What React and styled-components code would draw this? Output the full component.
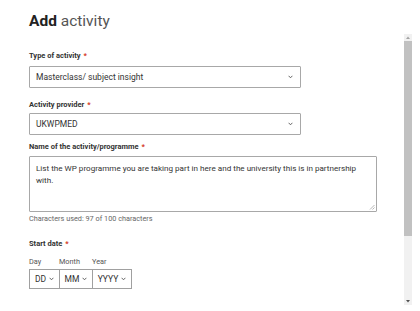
import React from 'react';
import styled, { createGlobalStyle } from 'styled-components';

const GlobalStyle = createGlobalStyle`
  html, body {
    margin: 0;
    padding: 0;
    background: #fff;
  }
  body {
    font-family: Roboto, "Liberation Sans", Arial, sans-serif;
    color: #333;
  }
`;

const Page = styled.div`
  width: 420px;
  height: 311px;
  box-sizing: border-box;
  padding: 11px 8px 6px 29px;
  display: flex;
  flex-direction: column;
  overflow: hidden;
`;

const Title = styled.h1`
  margin: 0;
  font-size: 15.5px;
  line-height: 20px;
  font-weight: 400;
  color: #555;
  b {
    font-weight: 700;
    color: #222;
  }
`;

const Body = styled.div`
  flex: 1;
  display: flex;
  margin-top: 3px;
`;

const Form = styled.form`
  flex: 1;
  padding-top: 17px;
`;

const Field = styled.div`
  margin-bottom: ${p => p.$gap || 0}px;
`;

const Label = styled.div`
  font-size: 7.5px;
  line-height: 10px;
  font-weight: 700;
  color: #333;
  margin-bottom: ${p => p.$gap || 5}px;
  span {
    color: #d4351c;
    margin-left: 3px;
  }
`;

const Select = styled.div`
  width: 272px;
  height: 22px;
  box-sizing: border-box;
  border: 1px solid #a8a8a8;
  border-radius: 1px;
  display: flex;
  align-items: center;
  justify-content: space-between;
  padding: 0 7px 0 6px;
  font-size: 8.5px;
  color: #333;
`;

const TextArea = styled.div`
  position: relative;
  width: 348px;
  height: 56px;
  box-sizing: border-box;
  border: 1px solid #a8a8a8;
  border-radius: 1px;
  padding: 5px 6px;
  font-size: 8.1px;
  line-height: 12px;
  color: #333;
`;

const Grip = styled.svg`
  position: absolute;
  right: 1px;
  bottom: 1px;
`;

const Hint = styled.div`
  font-size: 7.3px;
  line-height: 10px;
  color: #666;
  margin-top: 2px;
`;

const DateRow = styled.div`
  display: flex;
`;

const DatePart = styled.div`
  display: flex;
  flex-direction: column;
  width: ${p => p.$w}px;
`;

const PartLabel = styled.div`
  font-size: 7.3px;
  line-height: 10px;
  color: #555;
  margin-bottom: 2px;
`;

const PartBox = styled.div`
  height: 20px;
  box-sizing: border-box;
  border: 1px solid #a0a0a0;
  margin-right: -1px;
  display: flex;
  align-items: center;
  justify-content: center;
  gap: 3px;
  font-size: 8.5px;
  color: #333;
`;

const Scrollbar = styled.div`
  width: 8px;
  display: flex;
  flex-direction: column;
  background: #f1f1f1;
`;

const Arrow = styled.div`
  height: 7px;
  display: flex;
  align-items: center;
  justify-content: center;
`;

const Thumb = styled.div`
  height: 195px;
  background: #c1c1c1;
`;

const Spacer = styled.div`
  flex: 1;
`;

const Chevron = () => (
  <svg width="5" height="4" viewBox="0 0 5 4">
    <path d="M0.6 0.8 L2.5 2.8 L4.4 0.8" fill="none" stroke="#555" strokeWidth="0.9" />
  </svg>
);

const Dropdown = ({ children }) => (
  <Select>
    <span>{children}</span>
    <Chevron />
  </Select>
);

export default function App() {
  return (
    <>
      <GlobalStyle />
      <Page>
        <Title>
          <b>Add</b> activity
        </Title>
        <Body>
          <Form>
            <Field $gap={12}>
              <Label>Type of activity<span>*</span></Label>
              <Dropdown>Masterclass/ subject insight</Dropdown>
            </Field>
            <Field $gap={7}>
              <Label $gap={3}>Activity provider<span>*</span></Label>
              <Dropdown>UKWPMED</Dropdown>
            </Field>
            <Field $gap={15}>
              <Label $gap={4}>Name of the activity/programme<span>*</span></Label>
              <TextArea>
                List the WP programme you are taking part in here and the university this is in partnership
                with.
                <Grip width="6" height="6" viewBox="0 0 6 6">
                  <path d="M5.5 1 L1 5.5 M5.5 3.5 L3.5 5.5" stroke="#999" strokeWidth="0.7" />
                </Grip>
              </TextArea>
              <Hint>Characters used: 97 of 100 characters</Hint>
            </Field>
            <Field>
              <Label $gap={8}>Start date<span>*</span></Label>
              <DateRow>
                <DatePart $w={30}>
                  <PartLabel>Day</PartLabel>
                  <PartBox>DD <Chevron /></PartBox>
                </DatePart>
                <DatePart $w={33}>
                  <PartLabel>Month</PartLabel>
                  <PartBox>MM <Chevron /></PartBox>
                </DatePart>
                <DatePart $w={39}>
                  <PartLabel>Year</PartLabel>
                  <PartBox>YYYY <Chevron /></PartBox>
                </DatePart>
              </DateRow>
            </Field>
          </Form>
          <Scrollbar>
            <Arrow>
              <svg width="4" height="3" viewBox="0 0 4 3"><path d="M0 3 L2 0.5 L4 3 Z" fill="#a3a3a3" /></svg>
            </Arrow>
            <Thumb />
            <Spacer />
            <Arrow>
              <svg width="4" height="3" viewBox="0 0 4 3"><path d="M0 0 L2 2.5 L4 0 Z" fill="#505050" /></svg>
            </Arrow>
          </Scrollbar>
        </Body>
      </Page>
    </>
  );
}
